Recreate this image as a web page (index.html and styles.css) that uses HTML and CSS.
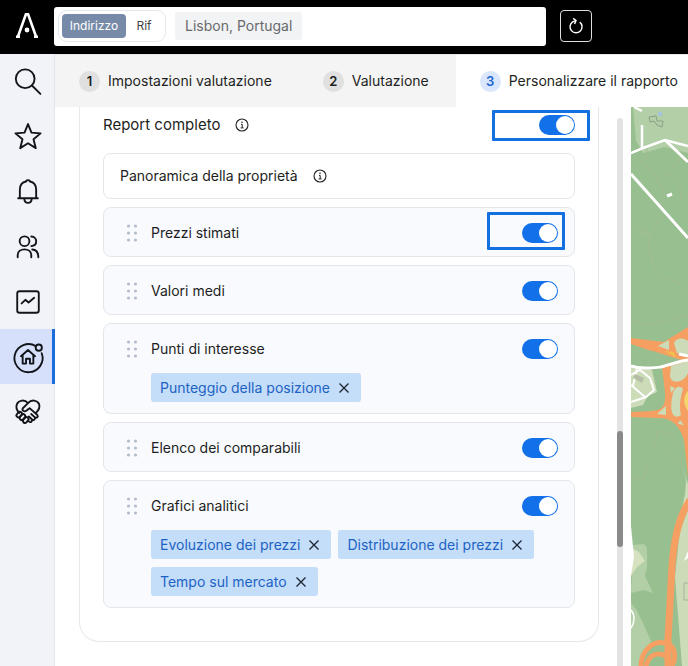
FILE: index.html
```html
<!DOCTYPE html>
<html lang="it">
<head>
<meta charset="utf-8">
<meta name="viewport" content="width=device-width, initial-scale=1">
<title>Personalizzare il rapporto</title>
<link rel="stylesheet" href="styles.css">
</head>
<body>
<svg class="defs" aria-hidden="true">
  <symbol id="grip" viewBox="0 0 12 18"><g fill="#b4bccb"><circle cx="2.500" cy="2" r="1.600"/><circle cx="9.500" cy="2" r="1.600"/><circle cx="2.500" cy="9" r="1.600"/><circle cx="9.500" cy="9" r="1.600"/><circle cx="2.500" cy="16" r="1.600"/><circle cx="9.500" cy="16" r="1.600"/></g></symbol>
  <symbol id="info" viewBox="0 0 14 14"><circle cx="7" cy="7" r="6" fill="none" stroke="#222" stroke-width="1.1"/><path d="M6 6.400h1.200v3.400M5.600 9.900h3" fill="none" stroke="#222" stroke-width="1"/><circle cx="7" cy="4.200" r=".8" fill="#222"/></symbol>
  <symbol id="cross" viewBox="0 0 12 12"><path d="M1.500 1.500l9 9M10.500 1.500l-9 9" fill="none" stroke="#1b2430" stroke-width="1.300"/></symbol>
</svg>
<header class="topbar">
  <a class="logo" href="#" aria-label="Home"><svg width="24" height="26" viewBox="0 0 24 26"><path d="M2.800 25L10.900 2.200h2.200L21.200 25M1 24.700h4M19 24.700h4" fill="none" stroke="#fff" stroke-width="2.600"/><circle cx="12" cy="18" r="2.400" fill="#fff"/></svg></a>
  <div class="search">
    <div class="mode">
      <button class="mode-btn active">Indirizzo</button>
      <button class="mode-btn">Rif</button>
    </div>
    <span class="place">Lisbon, Portugal</span>
  </div>
  <button class="refresh" aria-label="Aggiorna"><svg width="18" height="18" viewBox="0 0 18 18" fill="none" stroke="#fff" stroke-width="1.400"><path d="M12.800 5.100A6 6 0 1 1 5.700 4.800L8.700 3.700"/><path d="M6.200 1.400L9 3.500L7.600 6.900"/></svg></button>
</header>
<div class="shell">
  <nav class="sidebar" aria-label="Principale">
    <a href="#" aria-label="Cerca"><svg viewBox="0 0 32 32"><circle cx="13" cy="12.500" r="10"/><path d="M20.200 19.700l9 9"/></svg></a>
    <a href="#" aria-label="Preferiti"><svg viewBox="0 0 32 32"><path d="M16 2.200l3.700 9.200 9.700.7-7.500 6.300 2.400 9.500L16 22.700l-8.300 5.200 2.400-9.500-7.500-6.300 9.700-.7z"/></svg></a>
    <a href="#" aria-label="Notifiche"><svg viewBox="0 0 32 32"><path d="M5.500 22.600h21M7.300 22.500V13.500C7.300 8.500 10.500 5.500 14 4.800C14 2.800 18 2.800 18 4.800C21.500 5.500 24.700 8.500 24.700 13.500v9M12 23c.3 6.200 7.700 6.200 8 0"/></svg></a>
    <a href="#" aria-label="Contatti"><svg viewBox="0 0 32 32"><circle cx="12.300" cy="9.800" r="5.200"/><path d="M5 27v-2.500c0-8 14.500-8 14.500 0V27M19.500 4.800c7 .2 7 9.800 0 10.200M20.500 18.700c4 .2 6.500 3 6.500 8.300"/></svg></a>
    <a href="#" aria-label="Mercato"><svg viewBox="0 0 32 32"><rect x="4.500" y="4.500" width="23" height="23" rx="2.500"/><path d="M9.200 17.500l4-3.800 3.400 2.800 6-5"/></svg></a>
    <a href="#" class="current" aria-label="Valutazioni" aria-current="page"><svg viewBox="0 0 32 32"><path d="M24.500 4.500A15 15 0 1 0 30.600 12"/><circle cx="27.500" cy="6" r="3.300"/><path d="M8.500 15.200L16 8.500l7.500 6.700M10.300 14v9h3.600v-5.200h4.200V23h3.600v-9"/></svg></a>
    <a href="#" aria-label="Collaborazioni"><svg viewBox="0 0 32 32"><path d="M16 6.500C12.500 2.500 6.500 3 4.200 7.500C2.700 11 4 14 6.500 17M16 6.500C19.500 2.500 25.500 3 27.800 7.500C29.300 11.500 27 14.500 24.500 17M16 6.500L10.500 12c-1.500 2 1.500 4.500 4 2.500l3.200-2.600 8.300 7.300c1.500 2-1 3.800-2.600 2.500l-4-3.500M23 21.500c1.500 2-.8 4-2.600 2.500l-3.500-3.300M20 24.500c.5 2.500-1.500 3-3.500 1.200"/><rect x="4.500" y="15.500" width="4.200" height="6.500" rx="2.100" transform="rotate(42 6.600 18.700)"/><rect x="8" y="18" width="4.200" height="6.800" rx="2.100" transform="rotate(42 10.100 21.400)"/><rect x="11.500" y="21.200" width="4.200" height="6.800" rx="2.100" transform="rotate(42 13.600 24.600)"/></svg></a>
  </nav>
  <main class="workspace">
    <nav class="tabs" aria-label="Passaggi">
      <a class="tab" href="#"><span class="num">1</span>Impostazioni valutazione</a>
      <a class="tab" href="#"><span class="num">2</span>Valutazione</a>
      <a class="tab current" href="#" aria-current="step"><span class="num">3</span>Personalizzare il rapporto</a>
    </nav>
    <div class="content">
      <div class="scroll">
        <section class="panel">
          <div class="head">
            <label for="full">Report completo</label>
            <svg class="info" width="14" height="14"><use href="#info"/></svg>
            <span class="switch marked wide"><input type="checkbox" id="full" checked></span>
          </div>
          <div class="card plain"><span>Panoramica della proprietà</span><svg class="info" width="14" height="14"><use href="#info"/></svg></div>
          <div class="card">
            <div class="row"><svg class="grip"><use href="#grip"/></svg><label for="s1">Prezzi stimati</label><span class="switch marked"><input type="checkbox" id="s1" checked></span></div>
          </div>
          <div class="card">
            <div class="row"><svg class="grip"><use href="#grip"/></svg><label for="s2">Valori medi</label><span class="switch"><input type="checkbox" id="s2" checked></span></div>
          </div>
          <div class="card">
            <div class="row"><svg class="grip"><use href="#grip"/></svg><label for="s3">Punti di interesse</label><span class="switch"><input type="checkbox" id="s3" checked></span></div>
            <div class="chips">
              <span class="chip">Punteggio della posizione<button aria-label="Rimuovi"><svg><use href="#cross"/></svg></button></span>
            </div>
          </div>
          <div class="card">
            <div class="row"><svg class="grip"><use href="#grip"/></svg><label for="s4">Elenco dei comparabili</label><span class="switch"><input type="checkbox" id="s4" checked></span></div>
          </div>
          <div class="card">
            <div class="row"><svg class="grip"><use href="#grip"/></svg><label for="s5">Grafici analitici</label><span class="switch"><input type="checkbox" id="s5" checked></span></div>
            <div class="chips">
              <span class="chip">Evoluzione dei prezzi<button aria-label="Rimuovi"><svg><use href="#cross"/></svg></button></span>
              <span class="chip">Distribuzione dei prezzi<button aria-label="Rimuovi"><svg><use href="#cross"/></svg></button></span>
              <span class="chip">Tempo sul mercato<button aria-label="Rimuovi"><svg><use href="#cross"/></svg></button></span>
            </div>
          </div>
        </section>
      </div>
      <div class="track" aria-hidden="true"><div class="thumb"></div></div>
      <svg class="map" viewBox="631 107 57 559" preserveAspectRatio="xMinYMin slice" role="img" aria-label="Mappa">
        <path fill="#98bf90" d="M631 107h57v559h-57z"/>
        <path fill="#b2cfa7" d="M633 107h55v46l-23-6-22 6-7-12z"/>
        <path fill="none" stroke="#8b9f87" d="M649 117l7-1 1 5 6 0-1 6-5-2-3-4-4 1z"/>
        <circle cx="660" cy="114" r="2.200" fill="#a5c2e2"/>
        <g fill="none" stroke="#a6bd94" stroke-width="1">
          <path d="M647 148l-1 9-7 5 10 6 9 11 7-6 9 5 8 13-2 10M658 181l7 13-4 10 2 12-13 18-1 11 4 20 10 13 16 5 9 12M672 169l11-17M631 225l17 7M631 244l10-10h10M631 321c20 6 38-1 57-7M653 447l5-16 13 3 6 10-11 7 14 11 7-6M631 478l13 1 3-14"/>
        </g>
        <g fill="none" stroke="#fff"><path stroke-width="2.500" d="M634 107l8 4M631 153l12-5 22-8 23 6M642 125v23"/><path stroke-width="3" d="M665 140l23 22M631 174l57 64"/><path stroke-width="3" d="M667 196l5-2"/></g>
        <path fill="#ccdcb9" d="M631 367l16 0 5 3 5 22-9 4-5 9-12 3z"/>
        <g fill="none" stroke="#fff" stroke-width="2"><path d="M631 375l9-5 10 8 4 12-8 7-15 5M631 385l14 12M637 368l-4 18"/></g>
        <path fill="#b5bea5" d="M635 374l9 4-2 5-9-5z"/>
        <path fill="#f5a062" d="M631 338l33 4 24-15v150l-4-37c-5-17-14-22-26-22l-27-1v-5l22-1c11-1 13-8 12-19l-3-25-5-14-26-9z"/>
        <path fill="#98bf90" d="M631 349l22 2 28 9-12 5-38 2z"/>
        <g fill="#ccdcb9"><path d="M658 346l11-6v10z"/><path d="M674 343c3-6 10-5 14-2v15l-11-3z"/><path d="M671 366l17-5v12c-4 10-17 12-18 3z"/><path d="M673 393c3-8 8-7 10-4-3 10-4 18-2 26-9 6-12-5-8-22z"/><path d="M670 386l5 2-4 5zM657 414l9-8v9zM680 420l4 5-6-1z"/></g>
        <path fill="#f6d66c" d="M688 391c-5 5-5 14 0 20z"/>
        <path fill="none" stroke="#fff" stroke-width="3" d="M631 366c10 3 19 2 30 1l21-6 6-1M679 354l9 2"/>
        <path fill="#f4bd50" d="M665 351l11 7-2-6z"/>
        <path fill="#ccdcb9" d="M688 510l-8 20-5 47 7 89h6z"/>
        <path fill="#ccdcb9" d="M683 468l3 12-1 14-3 14-1 8 7-12v-20z"/>
        <path fill="#b2cfa7" d="M633 545l11-1 3 4v19l-2 9 8 17-9-3-13 3zM631 603l5 6 7 14 8 18-10 25h-10z"/>
        <path fill="#d6e1c0" d="M633 549l6 3 6 9-8 6-6 9z"/>
        <path fill="#fff" d="M631 526l3 31-3 19zM688 551l-4 10 4-3z"/>
        <path fill="none" stroke="#fff" stroke-width="1.500" d="M631 610c4 5 4 12 0 18"/>
        <path fill="none" stroke="#abb39d" d="M688 583h-4v17h4"/>
        <path fill="none" stroke="#f5a062" stroke-width="7" d="M690 500c-11 16-16 38-18 66l-4 74v26"/>
        <path fill="none" stroke="#f5a062" stroke-width="5" d="M641 666c0-15 12-26 24-23 10 2 12 13 7 23M646 666c3-14 17-16 24-5"/>
      </svg>
    </div>
  </main>
</div>
</body>
</html>
```

FILE: styles.css
```css
* { box-sizing: border-box; }
body {
  margin: 0;
  min-height: 100vh;
  display: flex;
  flex-direction: column;
  font-family: Inter, "Liberation Sans", sans-serif;
  font-size: 14px;
  line-height: 20px;
  color: #1d1f22;
  background: #fff;
}
a { color: inherit; text-decoration: none; }
button { font: inherit; color: inherit; border: 0; padding: 0; background: none; }
.defs { position: absolute; width: 0; height: 0; }

.topbar { display: flex; align-items: center; height: 54px; padding-right: 96px; background: #000; }
.logo { width: 54px; display: flex; justify-content: center; padding-bottom: 4px; }
.search { flex: 1; display: flex; align-items: center; gap: 9px; height: 39px; margin: 0 14px 2px 0; padding: 0 4px; background: #fff; border-radius: 3px; }
.mode { display: flex; padding: 3px; border: 1px solid #e6e8ec; border-radius: 9px; }
.mode-btn { width: 36px; height: 24px; border-radius: 4px; font-size: 12px; color: #444; }
.mode-btn.active { width: 64px; background: #778ba8; color: #fff; }
.place { padding: 4px 10px; border-radius: 3px; background: #f2f3f5; color: #68696b; }
.refresh { width: 32px; height: 32px; margin-bottom: 2px; display: flex; align-items: center; justify-content: center; border: 1px solid #ddd; border-radius: 4px; }

.shell { flex: 1; display: flex; }
.sidebar { width: 55px; flex: none; background: #f2f3f8; border-right: 1px solid #e3e5ea; }
.sidebar a { display: flex; align-items: center; justify-content: center; height: 55px; padding-left: 1px; }
.sidebar svg { width: 30px; height: 30px; fill: none; stroke: #111418; stroke-width: 2; stroke-linejoin: round; stroke-linecap: round; overflow: visible; }
.sidebar .current { background: #d6e0fb; margin-right: -1px; padding-left: 3px; border-right: 3px solid #1b6ddb; }

.workspace { flex: 1; min-width: 0; display: flex; flex-direction: column; }
.tabs { display: flex; height: 53px; border-top: 1px solid #e6e6e6; background: #f4f4f4; }
.tab { display: flex; align-items: center; gap: 8px; padding: 0 27px 0 24px; white-space: nowrap; }
.tab.current { flex: 1; padding-right: 0; background: #fff; }
.num { width: 21px; height: 21px; border-radius: 50%; background: #e0e0e0; text-align: center; font-size: 13px; font-weight: 600; }
.tab.current .num { background: #d9e6fb; color: #1b66d2; }

.content { flex: 1; display: flex; }
.scroll { flex: 1; min-width: 0; padding: 0 18px 24px 24px; }
.panel { display: flex; flex-direction: column; gap: 8px; padding: 0 23px 33px; border: 1px solid #e6e8ec; border-top: 0; border-radius: 0 0 20px 20px; }
.head { display: flex; align-items: center; height: 38px; padding-bottom: 2px; font-size: 15px; }
.info { margin-left: 15px; }
.card { border: 1px solid #e3e6eb; border-radius: 8px; background: #f9fafe; }
.card.plain { display: flex; align-items: center; height: 46px; padding: 0 16px; background: #fff; }
.row { display: flex; align-items: center; height: 48px; padding: 2px 16px 0 22px; }
.grip { width: 12px; height: 18px; margin-right: 13px; }
.switch { position: relative; display: flex; margin-left: auto; }
.switch input { appearance: none; display: flex; justify-content: flex-end; width: 36px; height: 20px; margin: 0; padding: 1px; border-radius: 10px; background: #1270e8; }
.switch input::before { content: ""; width: 18px; height: 18px; border-radius: 9px; background: #fff; }
.switch.marked::after { content: ""; position: absolute; inset: -11px -7px -7px -35px; border: 3px solid #1270e0; border-radius: 1px; }
.switch.wide::after { inset: -5px -15px -6px -47px; }
.chips { display: flex; flex-wrap: wrap; gap: 8px 7px; padding: 1px 32px 11px 47px; }
.chip { display: flex; align-items: center; gap: 8px; height: 29px; padding: 0 11px 0 9px; border-radius: 3px; background: #c4ddf9; color: #1c63c4; white-space: nowrap; }
.chip button { display: flex; }
.chip svg { width: 12px; height: 12px; }
.track { display: flex; flex-direction: column; width: 6px; margin: 11px 8px 0 0; border-radius: 3px 3px 0 0; background: #e3e3e3; }
.thumb { height: 116px; margin-top: 313px; border-radius: 3px; background: #8a8a8a; }
.map { width: 57px; flex: none; align-self: stretch; height: auto; }
```
